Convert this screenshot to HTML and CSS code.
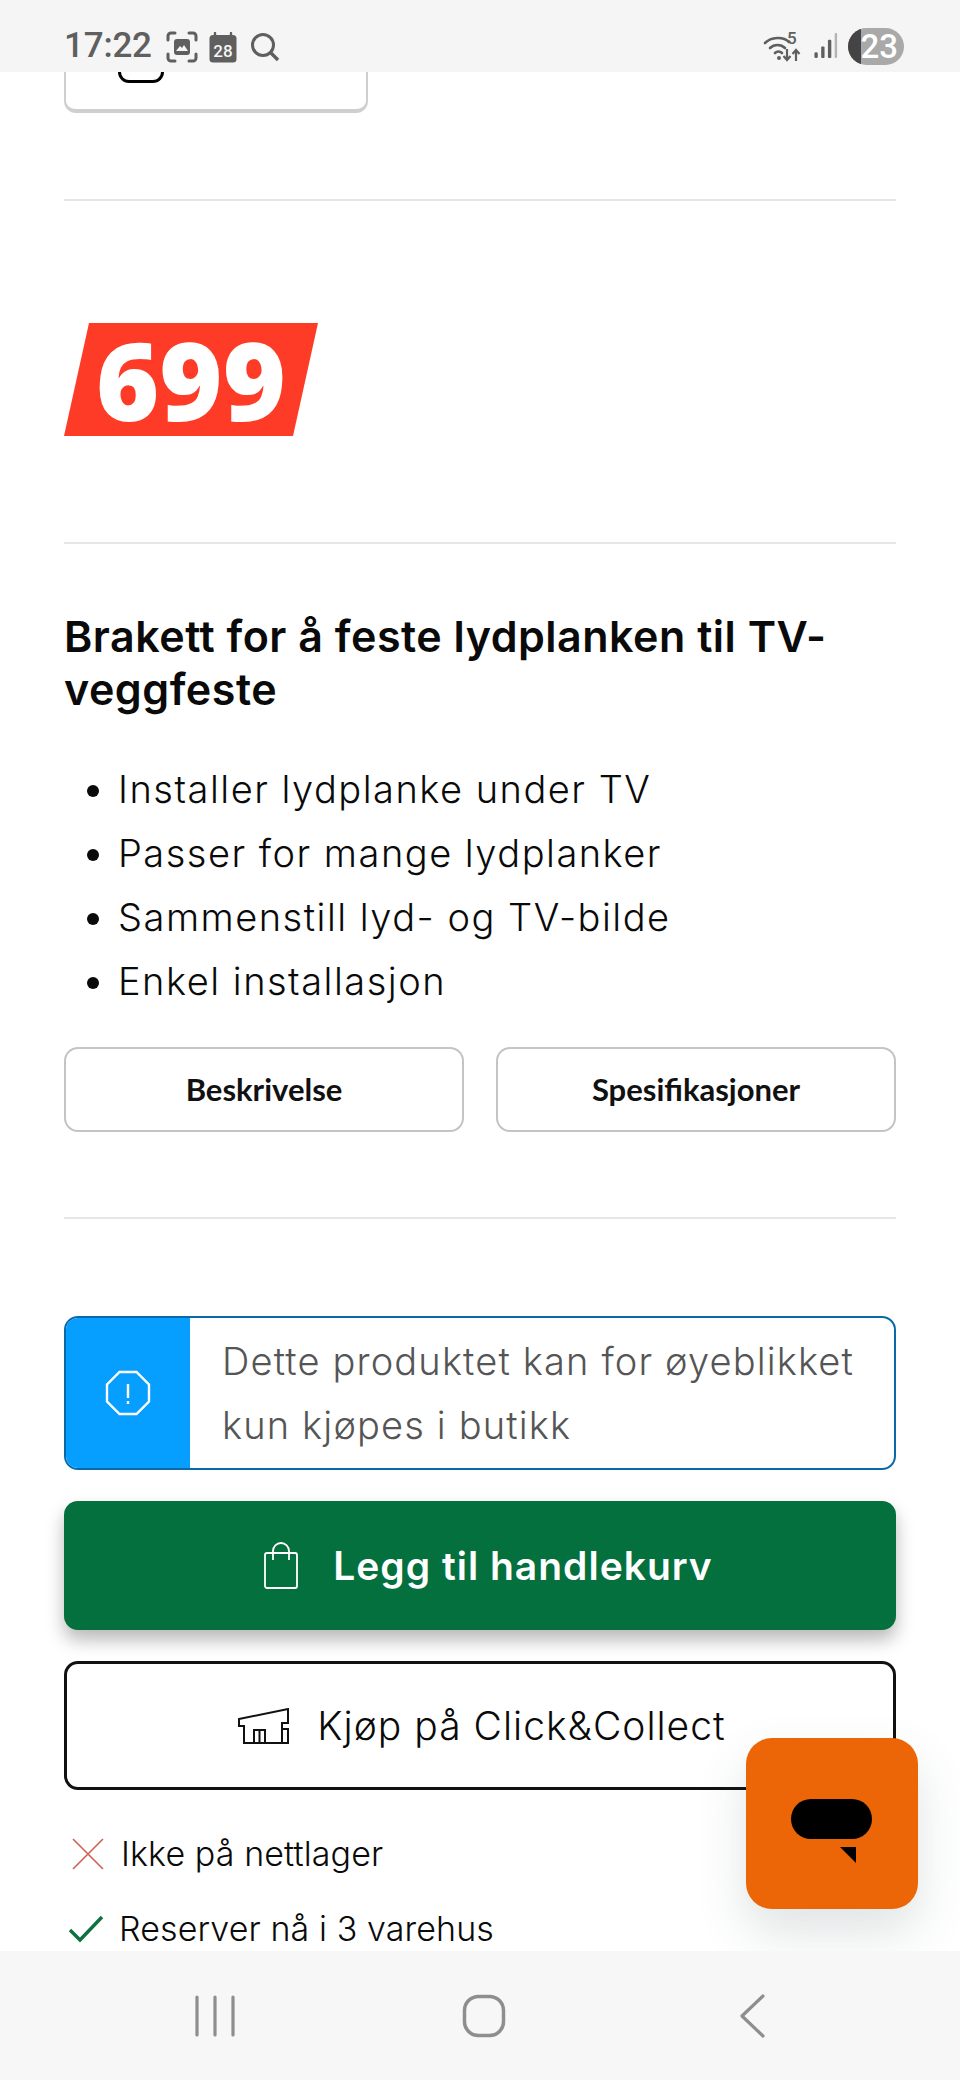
FILE: index.html
```html
<!DOCTYPE html>
<html lang="no">
<head>
<meta charset="utf-8">
<title>Brakett for lydplanke</title>
<link rel="stylesheet" href="styles.css">
</head>
<body>
<div class="phone">
  <header class="status">
    <div class="status-left">
      <span class="clock">17:22</span>
      <svg class="ic-shot" viewBox="0 0 32 32"><path d="M2 9V5a3 3 0 0 1 3-3h4M23 2h4a3 3 0 0 1 3 3v4M30 23v4a3 3 0 0 1-3 3h-4M9 30H5a3 3 0 0 1-3-3v-4" fill="none" stroke="#5f5f5f" stroke-width="3" stroke-linecap="round"/><rect x="8" y="8" width="16" height="16" rx="3" fill="#5f5f5f"/><path d="M10 20l4-5 2 2 2-3 4 6z" fill="#f5f5f5"/></svg>
      <svg class="ic-cal" viewBox="0 0 28 31"><path d="M6 1v4M22 1v4" stroke="#5f5f5f" stroke-width="2.400" stroke-linecap="round"/><rect x="0.500" y="3" width="27" height="27.500" rx="3.500" fill="#5f5f5f"/><text class="ic-cal-day" x="14" y="25" text-anchor="middle">28</text></svg>
      <svg class="ic-search" viewBox="0 0 30 30"><circle cx="13" cy="13" r="10.500" fill="none" stroke="#5f5f5f" stroke-width="3"/><path d="M21 21l7 7" stroke="#5f5f5f" stroke-width="3.400"/></svg>
    </div>
    <div class="status-right">
      <span class="wifi">
        <svg class="ic-wifi" viewBox="0 0 38 28"><path d="M2 9C8 3 20 2 26 8M7 14c4-4 11-4 15 0M12 19c2-2 5-2 7 0" fill="none" stroke="#5f5f5f" stroke-width="2.600" stroke-linecap="round"/><circle cx="16" cy="24" r="2" fill="#5f5f5f"/><path d="M24 15v11m-3.500-4l3.500 4 3.500-4M33 27V16m-3.500 4l3.500-4 3.500 4" fill="none" stroke="#5f5f5f" stroke-width="2.200"/></svg>
        <span class="wifi-5">5</span>
      </span>
      <svg class="ic-signal" viewBox="0 0 24 28"><rect x="0" y="20" width="3.500" height="6" rx="1.500" fill="#5f5f5f"/><rect x="7" y="14" width="3.500" height="12" rx="1" fill="#5f5f5f"/><rect x="14" y="7" width="3.500" height="19" rx="1" fill="#5f5f5f"/><rect x="21" y="0" width="2.500" height="26" rx="1" fill="#b4b4b4"/></svg>
      <span class="battery"><span class="battery-dark"></span><span class="battery-num">23</span></span>
    </div>
  </header>

  <main class="content">
    <div class="stub-card"><span class="stub-icon"></span></div>
    <hr class="rule rule-a">
    <div class="price"><span class="price-num">699</span></div>
    <hr class="rule rule-b">
    <h1 class="title">Brakett for å feste lydplanken til TV-veggfeste</h1>
    <ul class="points">
      <li>Installer lydplanke under TV</li>
      <li>Passer for mange lydplanker</li>
      <li>Sammenstill lyd- og TV-bilde</li>
      <li>Enkel installasjon</li>
    </ul>
    <div class="tabs">
      <a class="tab">Beskrivelse</a>
      <a class="tab">Spesifikasjoner</a>
    </div>
    <hr class="rule rule-c">
    <div class="notice">
      <div class="notice-side">
        <svg class="ic-warn" viewBox="0 0 48 48"><path d="M15.500 3h17L45 15.500v17L32.500 45h-17L3 32.500v-17z" fill="none" stroke="#fff" stroke-width="2.400"/><path d="M24 15v14" stroke="#fff" stroke-width="2.400"/><path d="M24 32v3" stroke="#fff" stroke-width="2.400"/></svg>
      </div>
      <p class="notice-text">Dette produktet kan for øyeblikket kun kjøpes i butikk</p>
    </div>
    <button class="btn btn-cart">
      <svg class="ic-bag" viewBox="0 0 36 48"><rect x="2" y="11" width="32" height="35" rx="2" fill="none" stroke="#fff" stroke-width="1.800"/><path d="M10 18V9a8 8 0 0 1 16 0v9" fill="none" stroke="#fff" stroke-width="1.800"/></svg>
      <span>Legg til handlekurv</span>
    </button>
    <button class="btn btn-collect">
      <svg class="ic-store" viewBox="0 0 51 36"><path d="M1 11L50 1v14h-6v6h6v14H6V18H1z" fill="none" stroke="#111" stroke-width="2"/><path d="M16 35V22h11v13M21.500 22v13M44 21v14" fill="none" stroke="#111" stroke-width="2"/></svg>
      <span>Kjøp på Click&amp;Collect</span>
    </button>
    <ul class="stock">
      <li class="stock-row">
        <svg class="ic-x" viewBox="0 0 34 32"><path d="M2 1l30 30M32 1L2 31" stroke="#d0604f" stroke-width="1.600" fill="none"/></svg>
        <span>Ikke på nettlager</span>
      </li>
      <li class="stock-row">
        <svg class="ic-check" viewBox="0 0 36 28"><path d="M2 15l10 10L34 2" stroke="#0e7142" stroke-width="3.400" fill="none"/></svg>
        <span>Reserver nå i 3 varehus</span>
      </li>
    </ul>
    <div class="chat">
      <span class="chat-pill"></span>
      <svg class="chat-tail" viewBox="0 0 16 16"><path d="M0 0h16v16z" fill="#000"/></svg>
    </div>
  </main>

  <nav class="navbar">
    <svg class="ic-recents" viewBox="0 0 40 42"><path d="M2 2v38M20 2v38M38 2v38" stroke="#8e8e8e" stroke-width="3.200" stroke-linecap="round"/></svg>
    <svg class="ic-home" viewBox="0 0 44 44"><rect x="2.500" y="2.500" width="39" height="39" rx="14" fill="none" stroke="#8e8e8e" stroke-width="3.500"/></svg>
    <svg class="ic-back" viewBox="0 0 27 44"><path d="M24 2L3 22l21 20" fill="none" stroke="#8e8e8e" stroke-width="3.200" stroke-linecap="round" stroke-linejoin="round"/></svg>
  </nav>
</div>
</body>
</html>
```
FILE: styles.css
```css
* { box-sizing: border-box; }
html, body { margin: 0; padding: 0; background: #fff; }
.phone {
  width: 960px;
  height: 2080px;
  display: flex;
  flex-direction: column;
  overflow: hidden;
  font-family: "Inter", "Liberation Sans", sans-serif;
  color: #0a0a0a;
}
.status {
  flex: none;
  height: 72px;
  background: #f5f5f5;
  display: flex;
  justify-content: space-between;
  padding: 28px 56px 0 64px;
  color: #5f5f5f;
}
.status-left { display: flex; align-items: flex-start; }
.status-right { display: flex; align-items: flex-start; }
.clock { font-family: "Roboto", sans-serif; font-size: 35px; line-height: 36px; font-weight: 500; width: 102px; letter-spacing: -.2px; }
.ic-shot { width: 32px; height: 32px; margin: 3px 0 0 0; }
.ic-cal { width: 28px; height: 31px; margin: 4px 0 0 11px; }
.ic-cal-day { font-family: "Roboto", sans-serif; font-size: 17px; font-weight: 500; fill: #f5f5f5; }
.ic-search { width: 30px; height: 30px; margin: 4px 0 0 13px; }
.wifi { position: relative; width: 38px; height: 28px; margin: 6px 0 0 0; }
.ic-wifi { width: 38px; height: 28px; display: block; }
.wifi-5 { position: absolute; left: 24px; top: -3px; font-family: "Roboto", sans-serif; font-size: 17px; line-height: 15px; font-weight: 500; color: #5f5f5f; }
.ic-signal { width: 24px; height: 27px; margin: 5px 0 0 13px; }
.battery { position: relative; width: 56px; height: 37px; margin-left: 10px; background: #a9a9a9; border-radius: 19px; overflow: hidden; display: flex; align-items: center; justify-content: flex-end; }
.battery-dark { position: absolute; left: 0; top: 0; bottom: 0; width: 13px; background: #444; }
.battery-num { font-family: "Roboto", sans-serif; font-size: 33px; line-height: 37px; font-weight: 500; color: #fff; padding-right: 6px; position: relative; }
.content {
  flex: 1;
  position: relative;
  overflow: hidden;
  padding: 0 64px;
  min-height: 0;
}
.stub-card {
  width: 304px;
  height: 41px;
  background: #fff;
  border: 2px solid #cfcfcf;
  border-top: 0;
  border-bottom-width: 4px;
  border-radius: 0 0 12px 12px;
  padding-left: 52px;
}
.stub-icon { display: block; width: 46px; height: 11px; border: 3px solid #000; border-top: 0; border-radius: 0 0 12px 12px; }
.rule { border: 0; height: 2px; margin: 0; background: #e6e6e6; }
.rule-a { margin-top: 86px; }
.price { margin-top: 122px; width: 254px; height: 113px; background: #fe3b26; clip-path: polygon(25px 0, 100% 0, 229px 100%, 0 100%); display: flex; align-items: center; justify-content: center; }
.price-num { font-family: "Open Sans", sans-serif; font-weight: 800; font-size: 108px; line-height: 113px; color: #fff; }
.rule-b { margin-top: 106px; }
.title { margin: 66px 0 0; font-size: 43px; line-height: 53px; font-weight: 600; letter-spacing: .5px; }
.points { margin: 41px 0 0; padding: 0 0 0 54px; font-size: 38px; line-height: 64px; font-weight: 300; }
.points li { letter-spacing: 1.500px; }
.tabs { display: flex; gap: 32px; margin-top: 34px; }
.tab { flex: 1; height: 85px; border: 2px solid #c4c4c4; border-radius: 14px; display: flex; align-items: center; justify-content: center; font-family: "Lato", sans-serif; font-size: 31px; font-weight: 700; color: #111; padding-bottom: 2px; }
.rule-c { margin-top: 85px; }
.notice { margin-top: 97px; height: 154px; border: 2px solid #0a6aa8; border-radius: 14px; display: flex; overflow: hidden; }
.notice-side { flex: none; width: 124px; background: #079fff; display: flex; align-items: center; justify-content: center; }
.ic-warn { width: 48px; height: 48px; }
.notice-text { margin: 0; padding: 11px 20px 0 32px; font-size: 38px; line-height: 64px; font-weight: 300; color: #555; letter-spacing: 1.150px; }
.btn { width: 100%; height: 129px; display: flex; align-items: center; justify-content: center; border-radius: 14px; font-family: inherit; }
.btn-cart { margin-top: 31px; padding-left: 22px; background: #04703e; border: 0; color: #fff; font-size: 39px; font-weight: 600; letter-spacing: 1px; box-shadow: 0 10px 18px rgba(0,0,0,.28); gap: 34px; }
.ic-bag { width: 36px; height: 48px; }
.btn-collect { margin-top: 31px; padding-left: 10px; background: #fff; border: 3px solid #111; color: #0a0a0a; font-size: 39px; font-weight: 300; letter-spacing: 1px; gap: 28px; }
.ic-store { width: 51px; height: 36px; }
.stock { list-style: none; margin: 26px 0 0; padding: 0; font-size: 34px; font-weight: 300; }
.stock-row { display: flex; align-items: center; height: 75px; gap: 15px; letter-spacing: .1px; }
.stock-row svg { flex: none; width: 36px; }
.ic-x { height: 32px; margin-left: 6px; }
.ic-check { height: 28px; margin-left: 4px; }
.chat { position: absolute; left: 746px; top: 1666px; width: 172px; height: 171px; background: #ec6608; border-radius: 26px; box-shadow: 0 24px 50px rgba(60,90,90,.16); }
.chat-pill { position: absolute; left: 45px; top: 61px; width: 81px; height: 40px; background: #000; border-radius: 20px; }
.chat-tail { position: absolute; left: 94px; top: 109px; width: 16px; height: 16px; }
.navbar { flex: none; height: 129px; background: #f7f7f7; display: flex; align-items: center; justify-content: space-between; padding: 0 194px 0 195px; }
.ic-recents { width: 40px; height: 42px; }
.ic-home { width: 44px; height: 44px; margin-right: 6px; }
.ic-back { width: 27px; height: 44px; }
```
